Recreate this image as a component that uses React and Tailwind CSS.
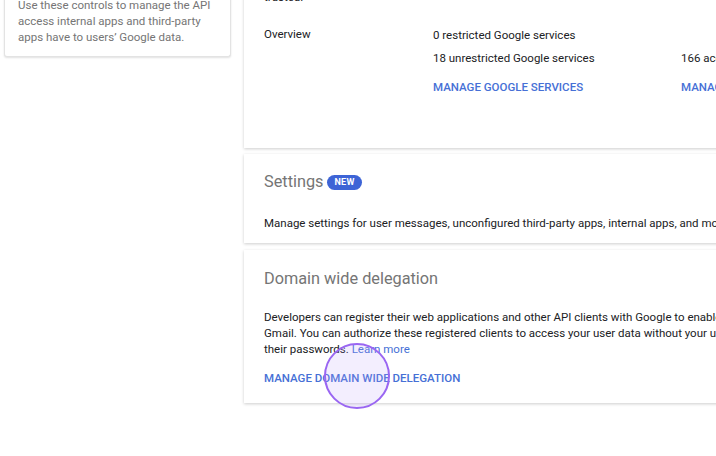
import React from 'react';

const font = { fontFamily: 'Roboto, "Liberation Sans", sans-serif' };

const App = () => {
    return (
        <div className="relative w-[716px] h-[456px] overflow-hidden bg-white text-[#3c4043]" style={font}>
            <div className="flex items-start">
                {/* Left info card */}
                <div className="ml-[4px] w-[227px] shrink-0 mt-[-5px] bg-white rounded-b-[3px] border border-t-0 border-[#e3e3e3] shadow-[0_1px_2px_rgba(0,0,0,0.12)] px-[13px] pt-[2px] pb-[11px]">
                    <p className="text-[11.5px] leading-[16px] text-[#757575]">
                        Use these controls to manage the API access internal apps and third-party apps have to users’ Google data.
                    </p>
                </div>

                {/* Main column */}
                <div className="ml-[13px] w-[620px] shrink-0 flex flex-col gap-[6px]">
                    {/* Overview card */}
                    <div className="mt-[-11px] bg-white shadow-[0_1px_3px_rgba(0,0,0,0.2)] pl-[20px] pb-[53px]">
                        <p className="text-[11.5px] leading-[16px] text-[#202124]">trusted.</p>
                        <div className="mt-[21px] grid grid-cols-[169px_248px_1fr] text-[11.5px] leading-[16px] text-[#202124]">
                            <div>Overview</div>
                            <div className="flex flex-col">
                                <span className="mt-[1px]">0 restricted Google services</span>
                                <span className="mt-[7px]">18 unrestricted Google services</span>
                                <span className="mt-[13px] font-medium text-[#4670d6] whitespace-nowrap">MANAGE GOOGLE SERVICES</span>
                            </div>
                            <div className="flex flex-col whitespace-nowrap">
                                <span className="mt-[1px]">&nbsp;</span>
                                <span className="mt-[7px]">166 accessed apps</span>
                                <span className="mt-[13px] font-medium text-[#4670d6]">MANAGE THIRD-PARTY APP ACCESS</span>
                            </div>
                        </div>
                    </div>

                    {/* Settings card */}
                    <div className="bg-white shadow-[0_1px_3px_rgba(0,0,0,0.2)] pl-[20px] pt-[16px] pb-[12px]">
                        <div className="flex items-center h-[24px]">
                            <h2 className="text-[16.3px] text-[#757575]">Settings</h2>
                            <span className="ml-[4px] rounded-full bg-[#3d64d6] text-white text-[9px] font-bold tracking-[0.3px] leading-[13px] px-[7px] py-[1px]">NEW</span>
                        </div>
                        <p className="mt-[21px] text-[11.5px] leading-[16px] text-[#202124] whitespace-nowrap">
                            Manage settings for user messages, unconfigured third-party apps, internal apps, and more
                        </p>
                    </div>

                    {/* Domain wide delegation card */}
                    <div className="mt-[1px] bg-white shadow-[0_1px_3px_rgba(0,0,0,0.2)] pl-[20px] pt-[17px] pb-[17px]">
                        <h2 className="text-[16.3px] leading-[24px] text-[#757575]">Domain wide delegation</h2>
                        <p className="mt-[18px] text-[11.5px] leading-[16px] text-[#202124] whitespace-nowrap">
                            Developers can register their web applications and other API clients with Google to enable access to data in Google services like<br />
                            Gmail. You can authorize these registered clients to access your user data without your users having to individually give consent or<br />
                            their passwords. <span className="text-[#4670d6]">Learn more</span>
                        </p>
                        <div className="mt-[13px] text-[11.5px] leading-[16px] font-medium text-[#4670d6]">MANAGE DOMAIN WIDE DELEGATION</div>
                    </div>
                </div>
            </div>

            {/* Click indicator */}
            <div className="absolute left-[324px] top-[343px] w-[66px] h-[66px] rounded-full border-2 border-[#9a66f2] bg-[rgba(190,160,250,0.18)]"></div>
        </div>
    );
};

export default App;
